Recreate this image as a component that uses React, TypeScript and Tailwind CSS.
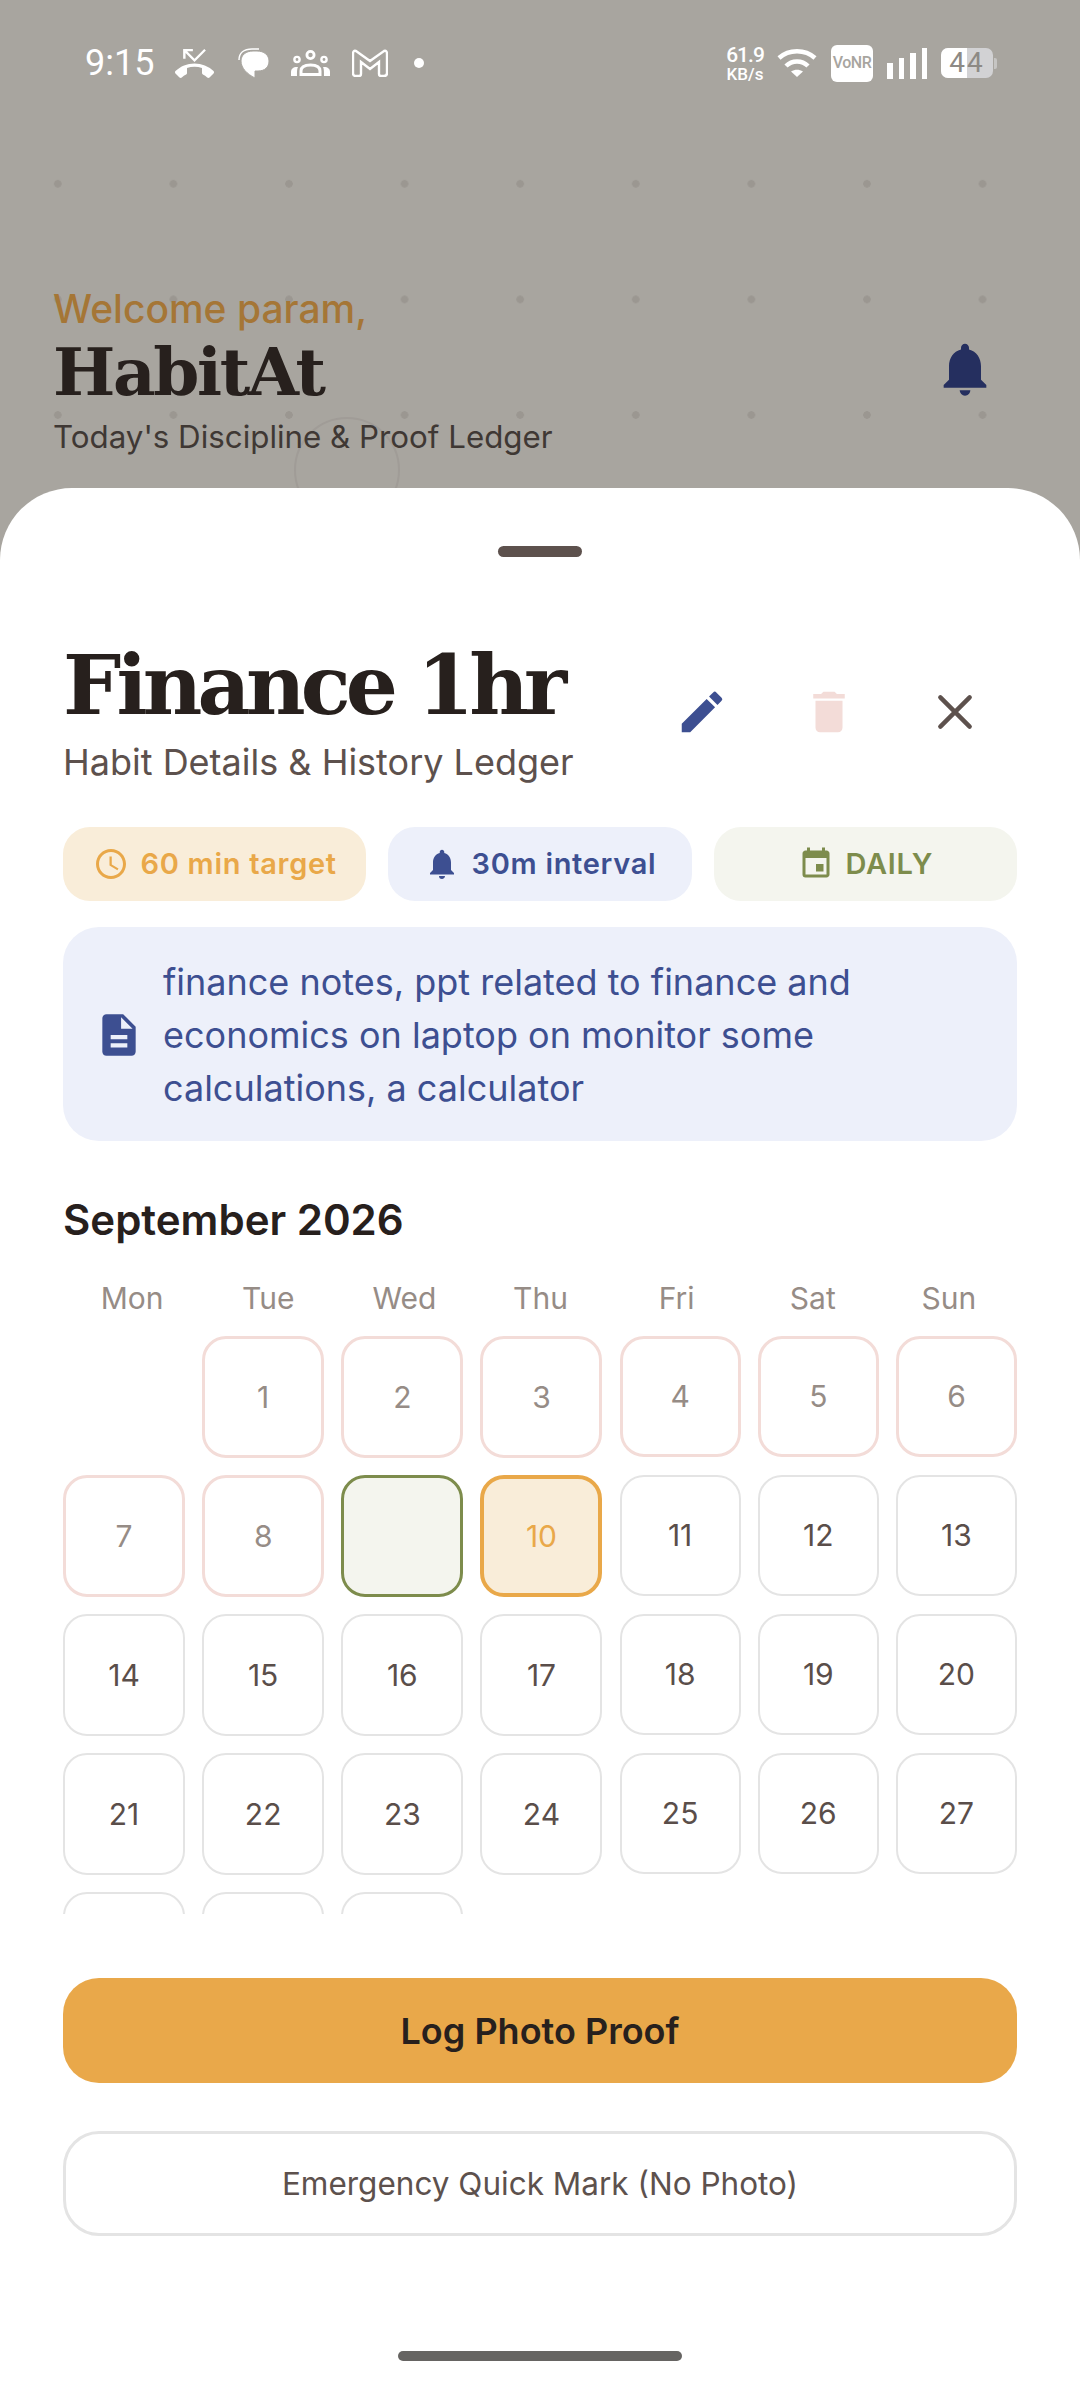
import React from 'react';
import {
  MdAccessTime,
  MdDelete,
  MdDescription,
  MdEdit,
  MdEvent,
  MdNotifications,
  MdPhoneMissed,
} from 'react-icons/md';

const weekdays = ['Mon', 'Tue', 'Wed', 'Thu', 'Fri', 'Sat', 'Sun'];

type DayKind = 'empty' | 'past' | 'done' | 'today' | 'future';

const dayClass: Record<DayKind, string> = {
  empty: '',
  past: 'border-[3px] border-[#f3dcd8] text-[#968c86]',
  done: 'border-[3px] border-[#7d8c4c] bg-[#f4f5ee]',
  today: 'border-[4px] border-[#e9a849] bg-[#f9edd9] text-[#e9a849]',
  future: 'border-2 border-[#e4e4e4] text-[#5a4e4a]',
};

// the last row is cut off by the scroll area above its numbers, so 28-30 have no label
const days: { label: string; kind: DayKind }[] = [
  { label: '', kind: 'empty' },
  ...Array.from({ length: 8 }, (_, i) => ({ label: String(i + 1), kind: 'past' as DayKind })),
  { label: '', kind: 'done' },
  { label: '10', kind: 'today' },
  ...Array.from({ length: 17 }, (_, i) => ({ label: String(i + 11), kind: 'future' as DayKind })),
  ...Array.from({ length: 3 }, () => ({ label: '', kind: 'future' as DayKind })),
];

const StatusBar = () => (
  <div className="flex h-[126px] items-center justify-between pl-[85px] pr-[83px] text-white">
    <div className="flex items-center">
      <span className="w-[67px] font-['Roboto'] text-[36px] leading-none">9:15</span>
      <MdPhoneMissed className="ml-[23px]" size={39} />
      {/* messages */}
      <svg className="ml-[24px]" width="31" height="30" viewBox="0 0 31 30" fill="white">
        <path d="M1 12C1 5 6 1 14 1H21" fill="none" stroke="white" strokeWidth="1.5" />
        <path d="M15 3H19C26 3 31 7 31 13C31 19 27 23 20 23H17V30C9 26 3 20 3 13C3 7 8 3 15 3Z" stroke="#a8a59f" strokeWidth="1" />
      </svg>
      {/* group */}
      <svg className="ml-[22px]" width="39" height="26" viewBox="0 0 39 26">
        <circle cx="19.5" cy="5" r="3.6" fill="none" stroke="white" strokeWidth="2.8" />
        <circle cx="6" cy="9.5" r="2.6" fill="none" stroke="white" strokeWidth="2.4" />
        <circle cx="33" cy="9.5" r="2.6" fill="none" stroke="white" strokeWidth="2.4" />
        <path d="M10 24.5V21C10 17 14 15 19.5 15S29 17 29 21V24.5Z" fill="none" stroke="white" strokeWidth="3" />
        <path d="M0 26V22C0 19 2 17 6 17L7 17C6 19 6 21 6 26Z" fill="white" />
        <path d="M39 26V22C39 19 37 17 33 17L32 17C33 19 33 21 33 26Z" fill="white" />
      </svg>
      {/* gmail */}
      <svg className="ml-[22px]" width="36" height="28" viewBox="0 0 36 28">
        <path
          d="M4 2L18 12L32 2Q35 1 35 5V24Q35 27 32 27H29Q27 27 27 25V13L18 20L9 13V25Q9 27 7 27H4Q1 27 1 24V5Q1 1 4 2Z"
          fill="none"
          stroke="white"
          strokeWidth="2.4"
        />
      </svg>
      <div className="ml-[26px] h-[10px] w-[10px] rounded-full bg-white" />
    </div>
    <div className="flex items-center">
      <div className="flex w-[36px] flex-col items-center font-['Roboto'] font-medium">
        <span className="text-[21px] leading-[22px] tracking-[-1px]">61.9</span>
        <span className="text-[17px] leading-[16px]">KB/s</span>
      </div>
      {/* wifi */}
      <svg className="ml-[14px]" width="40" height="28" viewBox="0 0 40 28" fill="none" stroke="white" strokeWidth="4.5">
        <path d="M2 9C12 0 28 0 38 9" />
        <path d="M9 17C15 11 25 11 31 17" />
        <path d="M14 22.5L20 28L26 22.5C22 20 18 20 14 22.5Z" fill="white" stroke="none" />
      </svg>
      <div className="ml-[14px] flex h-[37px] w-[42px] items-center justify-center rounded-[6px] bg-white font-['Roboto'] text-[16px] font-medium tracking-[-0.5px] text-[#a8a59f]">
        VoNR
      </div>
      <div className="ml-[14px] flex h-[31px] items-end gap-[6px]">
        <div className="h-[16px] w-[5.5px] bg-white" />
        <div className="h-[21px] w-[5.5px] bg-white" />
        <div className="h-[26px] w-[5.5px] bg-white" />
        <div className="h-[31px] w-[5.5px] bg-white" />
      </div>
      <div className="ml-[14px] flex items-center">
        <div className="relative flex h-[30px] w-[52px] items-center justify-center rounded-[7px] bg-[#d2d2d4] font-['Roboto'] text-[28px] text-[#8d8a85]">
          <div className="absolute inset-y-0 left-0 w-[26px] rounded-l-[7px] bg-white" />
          <span className="relative leading-none tracking-[2px]">44</span>
        </div>
        <div className="ml-[1px] h-[11px] w-[3px] rounded-r-[2px] bg-[#c6c5c3]" />
      </div>
    </div>
  </div>
);

const Chip = ({ className, icon, text }: { className: string; icon: React.ReactNode; text: string }) => (
  <div className={`flex h-[74px] items-center justify-center gap-[12px] rounded-[27px] text-[29px] font-semibold tracking-[0.7px] ${className}`}>
    {icon}
    <span>{text}</span>
  </div>
);

export default function App() {
  return (
    <div className="relative flex h-[2392px] w-[1080px] flex-col overflow-hidden bg-[#a8a59f] font-['Inter',sans-serif]">
      {/* dot pattern behind the header */}
      <div className="absolute inset-x-0 top-[126px] h-[347px] bg-[radial-gradient(circle,#9b9791_3.5px,transparent_4px)] bg-[length:115.6px_115.6px]" />
      {/* touch ripple */}
      <div className="absolute left-[294px] top-[417px] h-[106px] w-[106px] rounded-full border-[2px] border-[#a09c97]" />

      <div className="relative">
        <StatusBar />
        <div className="flex h-[362px] items-start justify-between pl-[53px] pr-[83px] pt-[158px]">
          <div>
            <p className="text-[39px] font-medium leading-[50px] text-[#a57636]">Welcome param,</p>
            <h1 className="mt-[-1px] font-['DejaVu_Serif',serif] text-[66px] font-bold leading-[78px] tracking-[-2.4px] text-[#27201d]">HabitAt</h1>
            <p className="mt-[7px] text-[31.3px] leading-[38px] text-[#3f3834]">Today's Discipline &amp; Proof Ledger</p>
          </div>
          <MdNotifications className="mt-[53px] text-[#252f5f]" size={64} />
        </div>
      </div>

      <div className="relative flex flex-1 flex-col rounded-t-[72px] bg-white px-[63px]">
        <div className="mx-auto mt-[58px] h-[11px] w-[84px] rounded-full bg-[#5d514d]" />

        <div className="mt-[73px] flex items-start justify-between">
          <div>
            <h2 className="font-['DejaVu_Serif',serif] text-[82px] font-bold leading-[110px] tracking-[-4.8px] text-[#27201d]">Finance 1hr</h2>
            <p className="text-[36px] leading-[44px] text-[#5d514d]">Habit Details &amp; History Ledger</p>
          </div>
          <div className="mr-[35px] mt-[55px] flex items-center gap-[72.5px]">
            <MdEdit className="text-[#3d4f91]" size={54} />
            <MdDelete className="text-[#f3dcd8]" size={54} />
            <svg width="54" height="54" viewBox="0 0 24 24" fill="none" stroke="#5d514d" strokeWidth="2" strokeLinecap="round">
              <path d="M5.5 5.5L18.5 18.5M18.5 5.5L5.5 18.5" />
            </svg>
          </div>
        </div>

        <div className="mt-[43px] grid grid-cols-3 gap-[22px]">
          <Chip className="bg-[#f9edd9] text-[#e9a849]" icon={<MdAccessTime size={36} />} text="60 min target" />
          <Chip className="bg-[#edf0fa] text-[#3d4f91]" icon={<MdNotifications size={36} />} text="30m interval" />
          <Chip className="bg-[#f4f5ee] text-[#7d8c4c]" icon={<MdEvent size={36} />} text="DAILY" />
        </div>

        <div className="mt-[26px] flex h-[214px] items-center gap-[19px] rounded-[36px] bg-[#edf0fa] pl-[31px] pr-[40px] pt-[2px] text-[#3d4f91]">
          <MdDescription className="shrink-0" size={50} />
          <p className="text-[36px] leading-[53px]">
            finance notes, ppt related to finance and economics on laptop on monitor some calculations, a calculator
          </p>
        </div>

        <h3 className="mt-[54px] text-[42px] font-semibold leading-[50px] text-[#27201d]">September 2026</h3>

        <div className="mt-[35px] grid grid-cols-7 pl-[1px]">
          {weekdays.map((d) => (
            <span key={d} className="text-center text-[30px] leading-[36px] text-[#968c86]">{d}</span>
          ))}
        </div>

        <div className="mt-[20px] h-[578px] overflow-hidden">
          <div className="grid grid-cols-[repeat(4,122px)_repeat(3,121px)] items-start justify-between gap-y-[17px]">
            {days.map((d, i) => (
              <div key={i} className={`flex aspect-square items-center justify-center rounded-[24px] text-[30px] ${dayClass[d.kind]}`}>
                {d.label}
              </div>
            ))}
          </div>
        </div>

        <button className="mt-[64px] h-[105px] rounded-[36px] bg-[#e9a84a] text-[36px] font-semibold text-[#27201d]">Log Photo Proof</button>
        <button className="mt-[48px] h-[105px] rounded-[36px] border-[3px] border-[#e4e4e4] text-[31.5px] text-[#5d514d]">Emergency Quick Mark (No Photo)</button>

        <div className="mx-auto mt-[115px] h-[10px] w-[284px] rounded-full bg-[#666462]" />
      </div>
    </div>
  );
}
